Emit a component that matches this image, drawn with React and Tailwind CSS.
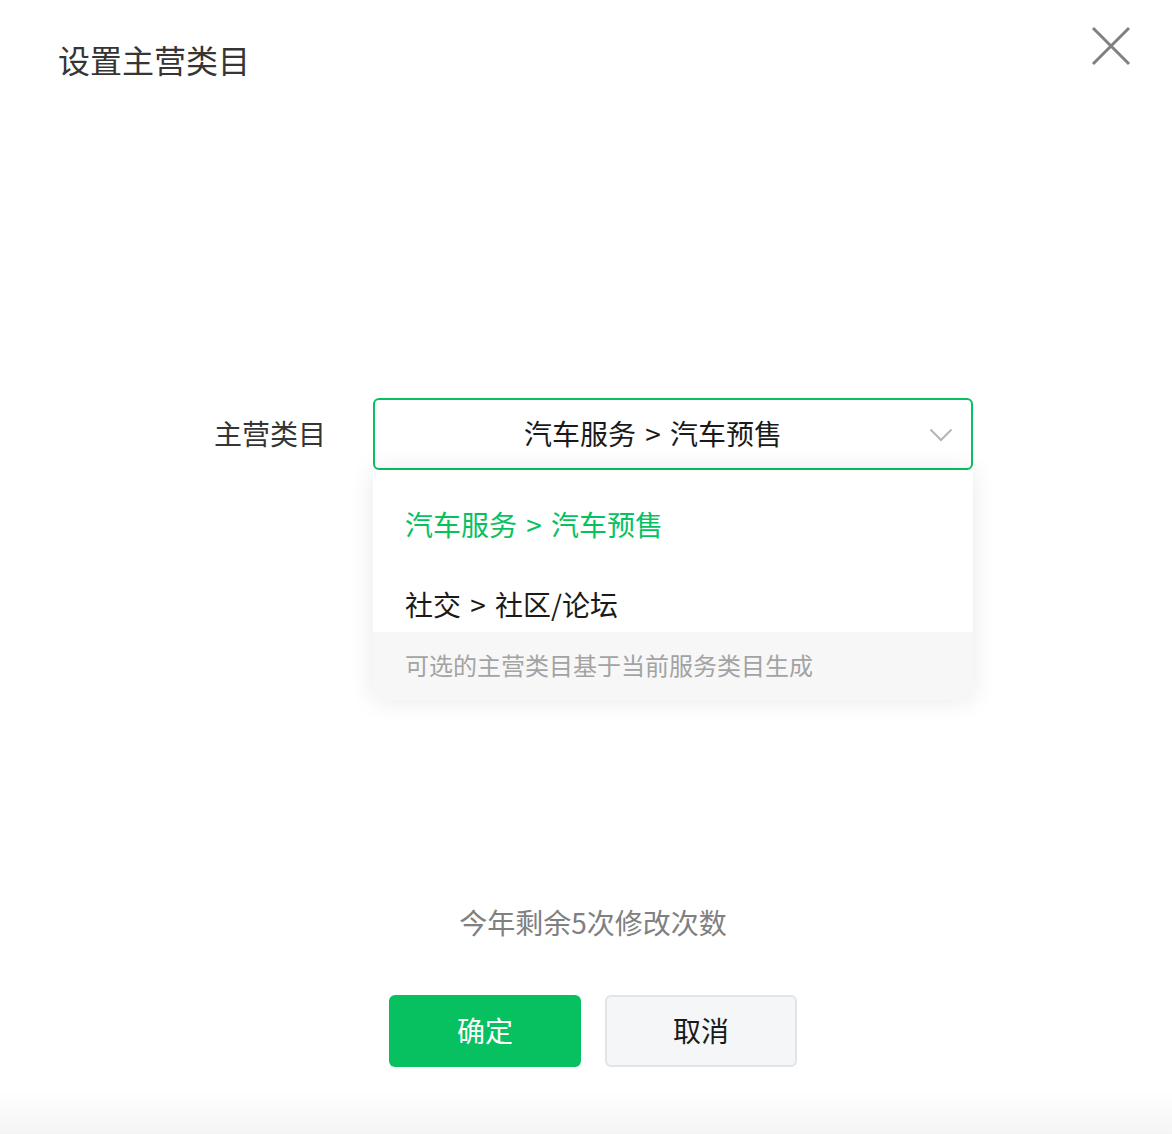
const font = { fontFamily: '"Noto Sans CJK SC", "Noto Sans", sans-serif' }

const CloseIcon = () => (
  <svg width="40" height="40" viewBox="0 0 40 40" fill="none">
    <path d="M2 2 L38 38 M38 2 L2 38" stroke="#808080" strokeWidth="3" />
  </svg>
)

const Chevron = () => (
  <svg width="24" height="14" viewBox="0 0 24 14" fill="none">
    <path d="M1.5 1.5 L12 12 L22.5 1.5" stroke="#b5b5b5" strokeWidth="2" />
  </svg>
)

const options = [
  { label: "汽车服务 > 汽车预售", selected: true },
  { label: "社交 > 社区/论坛", selected: false },
]

export default function App() {
  return (
    <div className="relative flex h-[1134px] w-full flex-col overflow-hidden bg-white" style={font}>
      {/* header */}
      <div className="flex items-start justify-between pl-[58px] pr-[41px] pt-[39px]">
        <h1 className="text-[32px] leading-[40px] font-normal text-[#353535]">设置主营类目</h1>
        <button className="-mt-[13px]">
          <CloseIcon />
        </button>
      </div>

      {/* form row */}
      <div className="mt-[319px] flex items-center pl-[214px]">
        <div className="-mt-[2px] w-[109px] text-[28px] leading-[40px] text-[#353535] whitespace-nowrap">主营类目</div>
        <div className="relative ml-[50px] w-[600px]">
          <div className="relative flex h-[72px] items-center justify-center rounded-[6px] border-2 border-[#07c160] bg-white pr-[40px]">
            <span className="-mt-[2px] text-[28px] leading-[40px] text-[#1a1a1a] [word-spacing:3px]">汽车服务 &gt; 汽车预售</span>
            <span className="absolute right-[18px] top-[28px]">
              <Chevron />
            </span>
          </div>

          {/* dropdown */}
          <div className="absolute left-0 top-[72px] z-10 w-[600px] overflow-hidden rounded-b-[6px] bg-white pt-[34px] shadow-[0_0_26px_rgba(0,0,0,0.09)]">
            {options.map((o, i) => (
              <div
                key={o.label}
                className={`px-[32px] text-[28px] leading-[40px] [word-spacing:3px] ${i > 0 ? "mt-[40px]" : ""} ${
                  o.selected ? "text-[#07c160]" : "text-[#1a1a1a]"
                }`}
              >
                {o.label}
              </div>
            ))}
            <div className="mt-[8px] flex h-[68px] items-center bg-[#f7f7f7] px-[32px] pb-[2px] text-[24px] text-[#a3a3a3]">
              可选的主营类目基于当前服务类目生成
            </div>
          </div>
        </div>
      </div>

      {/* footer */}
      <div className="mt-[432px] pl-[14px] text-center text-[28px] leading-[40px] text-[#808080]">今年剩余5次修改次数</div>
      <div className="mt-[53px] flex justify-center gap-[24px] pl-[14px]">
        <button className="flex h-[72px] w-[192px] items-center justify-center rounded-[6px] bg-[#07c160] pb-[2px] text-[28px] text-white">
          确定
        </button>
        <button className="flex h-[72px] w-[192px] items-center justify-center rounded-[6px] border-2 border-[#e3e4e6] bg-[#f5f6f8] pb-[2px] text-[28px] text-[#1a1a1a]">
          取消
        </button>
      </div>

      <div className="absolute bottom-0 left-0 h-[44px] w-full bg-gradient-to-b from-white to-[#f5f5f5]" />
    </div>
  )
}
